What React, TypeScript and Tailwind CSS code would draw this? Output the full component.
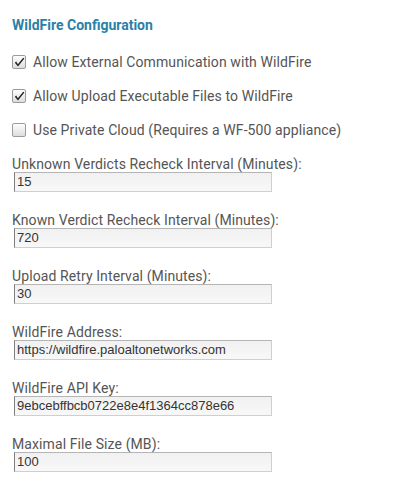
import React from "react";

const Check = ({ checked }: { checked: boolean }) => (
  <div className="w-[14px] h-[14px] rounded-[2px] border border-[#9a9a9a] bg-gradient-to-b from-[#fdfdfd] to-[#dedede] flex items-center justify-center shrink-0">
    {checked && (
      <svg width="11" height="11" viewBox="0 0 11 11">
        <path d="M0.8 5.8 L4 9.6 L10.4 1.6 L9.2 0.8 L3.9 7.2 L2.2 4.6 Z" fill="#222222" />
      </svg>
    )}
  </div>
);

const Row = ({ checked, label }: { checked: boolean; label: string }) => (
  <div className="h-[34px] flex items-center gap-[7px]">
    <Check checked={checked} />
    <span className="text-[14px] leading-[16px] tracking-[0.1px] text-[#555555]">{label}</span>
  </div>
);

const Field = ({ label, value, first }: { label: string; value: string; first?: boolean }) => (
  <div className={first ? "mt-[10px]" : "mt-[21px]"}>
    <div className="text-[14px] leading-[15px] tracking-[0.1px] text-[#555555]">{label}</div>
    <div
      className="ml-[2px] w-[258px] h-[20px] border border-[#cfcfcf] border-l-[#7d7d7d] border-t-[#b5b5b5] bg-gradient-to-b from-[#f1f1f1] to-[#f8f8f8] flex items-center pl-[2px] text-[13px] text-[#333333]"
      style={{ fontFamily: '"Liberation Sans", Arial, sans-serif' }}
    >
      {value}
    </div>
  </div>
);

export default function App() {
  return (
    <div
      className="w-[393px] h-[494px] bg-white pl-[12px] pt-[17px] overflow-hidden"
      style={{ fontFamily: 'Roboto, "Noto Sans", sans-serif' }}
    >
      <div className="text-[14px] font-bold leading-[16px] text-[#2b80a6]">WildFire Configuration</div>
      <div className="mt-[12px]">
        <Row checked label="Allow External Communication with WildFire" />
        <Row checked label="Allow Upload Executable Files to WildFire" />
        <Row checked={false} label="Use Private Cloud (Requires a WF-500 appliance)" />
      </div>
      <Field first label="Unknown Verdicts Recheck Interval (Minutes):" value="15" />
      <Field label="Known Verdict Recheck Interval (Minutes):" value="720" />
      <Field label="Upload Retry Interval (Minutes):" value="30" />
      <Field label="WildFire Address:" value="https://wildfire.paloaltonetworks.com" />
      <Field label="WildFire API Key:" value="9ebcebffbcb0722e8e4f1364cc878e66" />
      <Field label="Maximal File Size (MB):" value="100" />
    </div>
  );
}
